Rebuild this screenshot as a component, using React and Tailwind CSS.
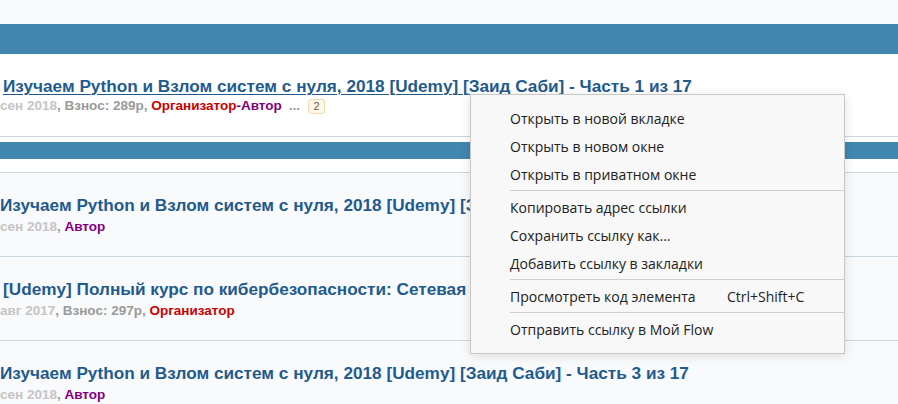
const rows = [
  {
    title: 'Изучаем Python и Взлом систем с нуля, 2018 [Udemy] [Заид Саби] - Часть 2 из 17',
    shift: 'pl-0',
    meta: [
      { t: 'сен 2018', c: 'text-[#c4c4c4]' },
      { t: ', ', c: 'text-[#9a9a9a]' },
      { t: 'Автор', c: 'text-[#800080]' },
    ],
  },
  {
    title: '[Udemy] Полный курс по кибербезопасности: Сетевая безопасность - Часть 1 из 4',
    shift: 'pl-[3px]',
    meta: [
      { t: 'авг 2017', c: 'text-[#c4c4c4]' },
      { t: ', Взнос: 297р, ', c: 'text-[#9a9a9a]' },
      { t: 'Организатор', c: 'text-[#cc0000]' },
    ],
  },
  {
    title: 'Изучаем Python и Взлом систем с нуля, 2018 [Udemy] [Заид Саби] - Часть 3 из 17',
    shift: 'pl-0',
    meta: [
      { t: 'сен 2018', c: 'text-[#c4c4c4]' },
      { t: ', ', c: 'text-[#9a9a9a]' },
      { t: 'Автор', c: 'text-[#800080]' },
    ],
  },
]

const menu = [
  ['Открыть в новой вкладке'],
  ['Открыть в новом окне'],
  ['Открыть в приватном окне'],
  'sep',
  ['Копировать адрес ссылки'],
  ['Сохранить ссылку как...'],
  ['Добавить ссылку в закладки'],
  'sep',
  ['Просмотреть код элемента', 'Ctrl+Shift+C'],
  'sep',
  ['Отправить ссылку в Мой Flow'],
]

function Row({ r }) {
  return (
    <div className="h-[84px] border-b border-[#c9d7e3] bg-[#f9fafc] pt-[22px] whitespace-nowrap overflow-hidden">
      <div className={`${r.shift} h-[20px] leading-[20px] text-[17.2px] font-bold text-[#1f5b8f]`}>{r.title}</div>
      <div className="mt-[3px] h-[18px] leading-[18px] text-[13.5px] font-bold">
        {r.meta.map((m, i) => (
          <span key={i} className={m.c}>{m.t}</span>
        ))}
      </div>
    </div>
  )
}

export default function App() {
  return (
    <div className="relative h-[404px] w-[898px] overflow-hidden bg-white" style={{ fontFamily: '"Liberation Sans", Arial, sans-serif' }}>
      <div className="h-[24px] bg-[#f9fafc]" />
      <div className="h-[30px] bg-[#4187af]" />

      <div className="h-[83px] border-b border-[#c9d7e3] bg-white pt-[22px] whitespace-nowrap overflow-hidden">
        <div className="pl-[3px] h-[20px] leading-[20px] text-[17.2px] font-bold text-[#1f5b8f]">
          <span className="underline decoration-1 underline-offset-2">Изучаем Python и Взлом систем с нуля, 2018 [Udemy] [Заид Саби] - Часть 1 из 17</span>
        </div>
        <div className="mt-[1px] flex h-[18px] items-center text-[13.5px] font-bold leading-[18px]">
          <span className="text-[#c4c4c4]">сен 2018</span>
          <span className="whitespace-pre text-[#9a9a9a]">, Взнос: 289р, </span>
          <span className="text-[#cc0000]">Организатор</span>
          <span className="text-[#800080]">-Автор</span>
          <span className="ml-[7px] text-[#9a9a9a]">...</span>
          <span className="ml-[8px] flex h-[15px] w-[17px] items-center justify-center rounded-[3px] border border-[#f2d7ae] bg-[#fff9ec] text-[11px] font-normal leading-none text-[#6b5a40]">2</span>
        </div>
      </div>

      <div className="h-[5px] bg-white" />
      <div className="h-[17px] bg-[#4187af]" />
      <div className="h-[14px] border-b border-[#c9d7e3] bg-white" />

      {rows.map((r, i) => (
        <Row key={i} r={r} />
      ))}

      <div
        className="absolute left-[470px] top-[94px] w-[375px] border border-[#c8c8c8] bg-[#f7f8f7] pt-[9px] pb-[10px] text-[14px] text-[#222] shadow-[0_2px_10px_rgba(0,0,0,0.12)]"
        style={{ fontFamily: '"Open Sans", "Noto Sans", sans-serif' }}
      >
        {menu.map((m, i) =>
          m === 'sep' ? (
            <div key={i} className="ml-[39px] my-[2px] h-px bg-[#cfcfcf]" />
          ) : (
            <div key={i} className="flex h-[28px] items-center pl-[39px]">
              <span className="w-[217px]">{m[0]}</span>
              {m[1] && <span>{m[1]}</span>}
            </div>
          )
        )}
      </div>
    </div>
  )
}
